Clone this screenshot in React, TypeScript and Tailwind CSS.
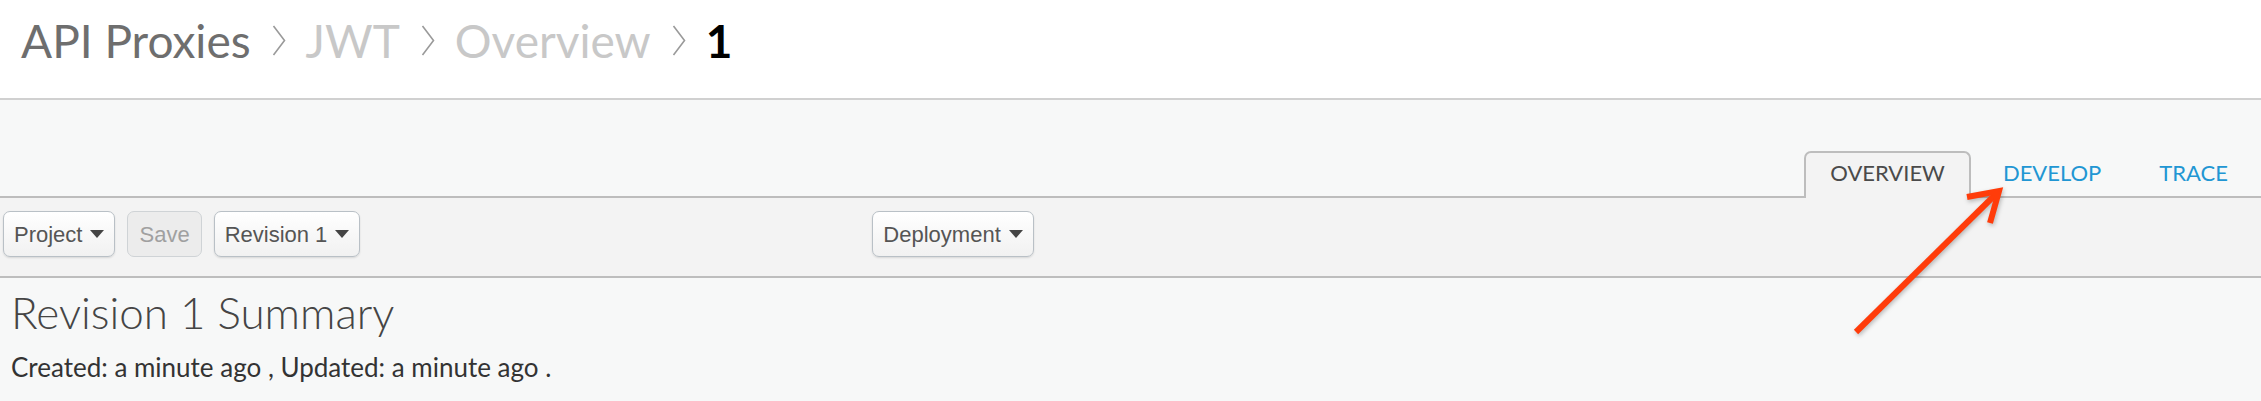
import React from "react";

const lato = { fontFamily: "Lato, 'Noto Sans', sans-serif" };

function Chevron() {
  return (
    <svg width="14" height="31" viewBox="0 0 14 31" className="ml-[21px] mr-[20px] shrink-0">
      <polyline points="1.5,1 12.5,15.5 1.5,30" fill="none" stroke="#9a9a9a" strokeWidth="1.6" />
    </svg>
  );
}

function Caret() {
  return (
    <svg width="14" height="8" viewBox="0 0 14 8" className="ml-[8px] shrink-0">
      <polygon points="0,0 14,0 7,8" fill="#444" />
    </svg>
  );
}

function ToolButton({ label, caret = true, disabled = false, className = "" }: { label: string; caret?: boolean; disabled?: boolean; className?: string }) {
  return (
    <button
      className={
        "flex h-[46px] items-center rounded-[7px] border px-[10px] text-[22px] " +
        (disabled
          ? "border-[#cfd3d6] bg-[#ececec] text-[#a0a0a0] "
          : "border-[#b9c0c6] bg-gradient-to-b from-white to-[#f1f1f1] text-[#555] shadow-[0_1px_2px_rgba(0,0,0,0.12)] ") +
        className
      }
      style={{ fontFamily: "'Liberation Sans', Arial, sans-serif" }}
    >
      {label}
      {caret && <Caret />}
    </button>
  );
}

export default function App() {
  return (
    <div className="relative h-[401px] w-[2261px] overflow-hidden bg-[#f7f8f8]" style={lato}>
      {/* Breadcrumb header */}
      <div className="flex h-[100px] items-start border-b-2 border-[#d0d0d0] bg-white pl-[21px] pt-[13px]">
        <div className="flex items-center text-[46px] leading-[1.2]">
          <span className="text-[#6e6e6e]">API Proxies</span>
          <Chevron />
          <span className="text-[#c8c8c8]">JWT</span>
          <Chevron />
          <span className="text-[#c8c8c8]">Overview</span>
          <Chevron />
          <span className="font-bold text-black">1</span>
        </div>
      </div>

      {/* Tabs */}
      <div className="flex h-[98px] items-end justify-end gap-[6px] border-b-2 border-[#bdbdbd] pr-[7px]">
        <div className="-mb-[2px] box-border h-[47px] rounded-t-[7px] border-2 border-b-0 border-[#bdbdbd] bg-[#f3f3f3] px-[24px] pt-[7px] text-[22px] leading-[1.2] text-[#4a4a4a]">
          OVERVIEW
        </div>
        <div className="-mb-[2px] box-border h-[47px] border-2 border-b-0 border-transparent px-[24px] pt-[7px] text-[22px] leading-[1.2] text-[#2196d3]">
          DEVELOP
        </div>
        <div className="-mb-[2px] box-border h-[47px] border-2 border-b-0 border-transparent px-[24px] pt-[7px] text-[22px] leading-[1.2] text-[#2196d3]">
          TRACE
        </div>
      </div>

      {/* Toolbar */}
      <div className="flex h-[80px] items-start gap-[12px] border-b-2 border-[#bdbdbd] bg-[#f3f3f3] pl-[3px] pt-[13px]">
        <ToolButton label="Project" />
        <ToolButton label="Save" caret={false} disabled className="px-[11px]" />
        <ToolButton label="Revision 1" />
        <ToolButton label="Deployment" className="ml-[500px]" />
      </div>

      {/* Summary */}
      <div className="pl-[11px] pt-[8px]">
        <div className="text-[44px] font-light leading-[1.2] text-[#454545]">Revision 1 Summary</div>
        <div className="mt-[13px] text-[26px] leading-[1.2] text-[#333]">
          Created: a minute ago , Updated: a minute ago .
        </div>
      </div>

      {/* Annotation arrow */}
      <svg
        className="pointer-events-none absolute left-0 top-0 drop-shadow-[1px_2px_2px_rgba(0,0,0,0.25)]"
        width="2261"
        height="401"
        viewBox="0 0 2261 401"
      >
        <line x1="1856" y1="332" x2="1997" y2="193" stroke="#ff3c0a" strokeWidth="6" />
        <polyline points="1967,197 1999,191 1990,223" fill="none" stroke="#ff3c0a" strokeWidth="6" strokeLinejoin="miter" />
      </svg>
    </div>
  );
}
